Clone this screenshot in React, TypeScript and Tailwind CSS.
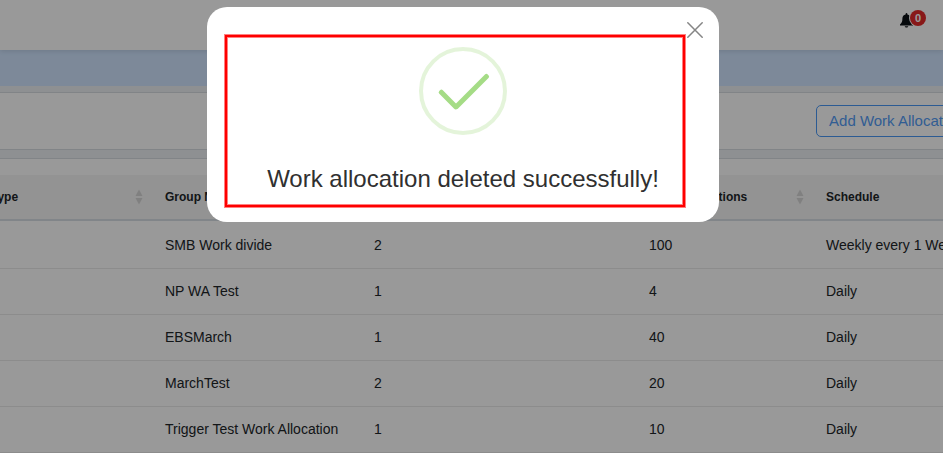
import { useState } from "react";

const allocations = [
  { group: "SMB Work divide", users: 2, count: 100, schedule: "Weekly every 1 Week" },
  { group: "NP WA Test", users: 1, count: 4, schedule: "Daily" },
  { group: "EBSMarch", users: 1, count: 40, schedule: "Daily" },
  { group: "MarchTest", users: 2, count: 20, schedule: "Daily" },
  { group: "Trigger Test Work Allocation", users: 1, count: 10, schedule: "Daily" },
];

const columns = [
  { title: "Type", width: "w-[174px]" },
  { title: "Group Name", width: "w-[209px]" },
  { title: "No. of Users", width: "w-[275px]" },
  { title: "No of Allocations", width: "w-[177px]" },
  { title: "Schedule", width: "" },
];

const SortIcon = () => (
  <svg width="8" height="16" viewBox="0 0 8 16" fill="#d6d6d6" aria-hidden="true">
    <path d="M4 0.500 7.500 7H0.500z" />
    <path d="M4 15.500 7.500 9H0.500z" />
  </svg>
);

const TopBar = () => (
  <header className="relative z-10 flex h-[50px] items-start justify-end bg-white pt-2.5 pr-[17px] shadow-[0_1px_5px_rgba(0,0,0,0.12)]">
    <button type="button" aria-label="Notifications" className="flex items-start">
      <svg width="14" height="16" viewBox="0 0 14 16" className="mt-0.5 -mr-1" fill="#0b0f14">
        <path d="M6.500 1c.5 0 .9.400.9.900v.6c2 .400 3.200 1.900 3.200 4.100 0 3 .6 4.400 2.400 6V13.500H0v-.9c1.800-1.600 2.400-3 2.400-6 0-2.200 1.200-3.700 3.200-4.100v-.6c0-.5.400-.9.900-.9zM4.700 14.200h3.600c-.2.900-.9 1.400-1.800 1.400s-1.600-.5-1.800-1.400z" />
      </svg>
      <span className="relative h-4 w-4 rounded-full bg-[#e32828] text-center text-[11px] leading-4 font-bold text-white ring-1 ring-white">
        0
      </span>
    </button>
  </header>
);

const AllocationTable = () => (
  <table className="w-full table-fixed text-left text-sm whitespace-nowrap text-[#212529]">
    <thead>
      <tr className="h-[45px] border-b-2 border-[#d8dee4] bg-[#f5f5f5] text-xs">
        {columns.map((col, index) => (
          <th key={col.title} className={`pr-2.5 pl-3 font-bold ${col.width}`}>
            <div className="flex items-center justify-between">
              {col.title}
              {index < columns.length - 1 && <SortIcon />}
            </div>
          </th>
        ))}
      </tr>
    </thead>
    <tbody>
      <tr className="h-0.5" aria-hidden="true">
        <td colSpan={5}></td>
      </tr>
      {allocations.map((row) => (
        <tr key={row.group} className="h-[46px] border-b border-[#eaeaea]">
          <td className="px-3"></td>
          <td className="px-3">{row.group}</td>
          <td className="px-3">{row.users}</td>
          <td className="px-3">{row.count}</td>
          <td className="px-3">{row.schedule}</td>
        </tr>
      ))}
    </tbody>
  </table>
);

const SuccessIcon = () => (
  <svg width="88" height="88" viewBox="0 0 88 88" fill="none" aria-hidden="true">
    <circle cx="44" cy="44" r="42" stroke="#a5dc86" strokeOpacity="0.3" strokeWidth="4" />
    <g fill="#a5dc86">
      <rect x="17" y="50" width="25" height="5" rx="2" transform="rotate(45 29.5 52.5)" />
      <rect x="29" y="42" width="47" height="5" rx="2" transform="rotate(-45 52.5 44.5)" />
    </g>
  </svg>
);

const SuccessDialog = ({ onClose }: { onClose: () => void }) => (
  <div className="fixed inset-0 z-20 flex items-start justify-center bg-black/40 pt-[7px] pr-[17px]">
    <div
      role="dialog"
      aria-labelledby="dialog-title"
      className="relative flex w-full max-w-lg flex-col items-center rounded-[20px] bg-white pt-10 pb-[27px]">
      <SuccessIcon />
      <h2 id="dialog-title" className="mt-7 text-2xl leading-8 text-[#303030]">
        Work allocation deleted successfully!
      </h2>
      <div className="pointer-events-none absolute top-7 right-[34px] bottom-[15px] left-[18px] border-2 border-[#ff0000] ring-1 inset-ring-1 ring-[#ff8080] inset-ring-[#ff8080]" />
      <button
        type="button"
        aria-label="Close"
        onClick={onClose}
        className="absolute top-[15px] right-4">
        <svg
          width="16"
          height="16"
          viewBox="0 0 16 16"
          stroke="#858585"
          strokeWidth="1.5"
          strokeLinecap="round">
          <path d="M0.800 0.800 15.200 15.200M15.200 0.800 0.800 15.200" />
        </svg>
      </button>
    </div>
  </div>
);

const App = () => {
  const [open, setOpen] = useState(true);

  return (
    <div className="min-h-screen overflow-hidden bg-[#edf0f3] font-['Liberation_Sans',Arial,sans-serif]">
      <TopBar />
      <div className="h-9 bg-[#d0e5ff]" />
      {/* content is wider than the window on both sides */}
      <main className="mt-1.5 -mr-12 -ml-[21px] flex flex-col gap-2">
        <section className="flex justify-end border-y border-[#d8dde2] bg-white py-3 pr-[15px]">
          <button
            type="button"
            className="h-8 rounded-[5px] border border-[#4a98f5] px-3 text-[15px] text-[#539bf5]">
            Add Work Allocation
          </button>
        </section>
        <section className="border-t border-[#d8dde2] bg-white pt-4">
          <AllocationTable />
        </section>
      </main>
      {open && <SuccessDialog onClose={() => setOpen(false)} />}
    </div>
  );
};

export default App;
